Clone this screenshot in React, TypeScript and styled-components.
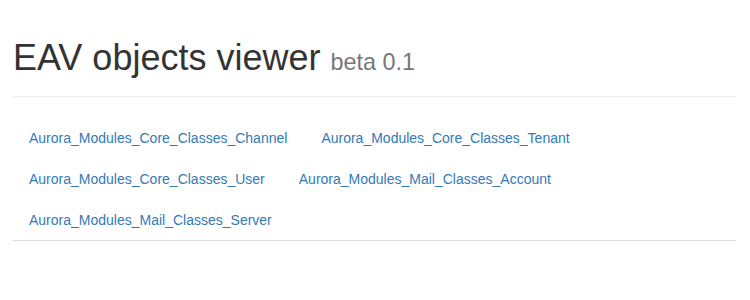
import React from 'react';
import styled, { createGlobalStyle } from 'styled-components';

const GlobalStyle = createGlobalStyle`
  html, body {
    margin: 0;
    padding: 0;
    background: #fff;
  }
  body {
    font-family: "Liberation Sans", Arial, Helvetica, sans-serif;
    font-size: 14px;
    line-height: 1.42857;
    color: #333;
  }
`;

const Page = styled.div`
  padding: 0 14px 0 13px;
`;

const PageHeader = styled.div`
  padding: 38px 0 18px;
  border-bottom: 1px solid #eee;
`;

const Title = styled.h1`
  margin: 0;
  font-size: 36px;
  line-height: 40px;
  font-weight: 500;
  color: #333;
`;

const Version = styled.small`
  font-size: 65%;
  line-height: 1;
  font-weight: 400;
  color: #777;
`;

const ClassList = styled.ul`
  list-style: none;
  margin: 21px 0 0;
  padding: 0 0 0 1px;
  display: flex;
  flex-wrap: wrap;
  column-gap: 4px;
  row-gap: 1px;
  border-bottom: 1px solid #ddd;
`;

const ClassItem = styled.li`
  display: block;
`;

const ClassLink = styled.a`
  display: block;
  padding: 10px 15px;
  line-height: 20px;
  font-size: 14px;
  color: #337ab7;
  text-decoration: none;
  border-radius: 4px;

  &:hover {
    background-color: #eee;
  }
`;

const classes = [
  'Aurora_Modules_Core_Classes_Channel',
  'Aurora_Modules_Core_Classes_Tenant',
  'Aurora_Modules_Core_Classes_User',
  'Aurora_Modules_Mail_Classes_Account',
  'Aurora_Modules_Mail_Classes_Server',
];

const App: React.FC = () => {
  return (
    <>
      <GlobalStyle />
      <Page>
        <PageHeader>
          <Title>
            EAV objects viewer <Version>beta 0.1</Version>
          </Title>
        </PageHeader>
        <ClassList>
          {classes.map((name) => (
            <ClassItem key={name}>
              <ClassLink href="#">{name}</ClassLink>
            </ClassItem>
          ))}
        </ClassList>
      </Page>
    </>
  );
};

export default App;
